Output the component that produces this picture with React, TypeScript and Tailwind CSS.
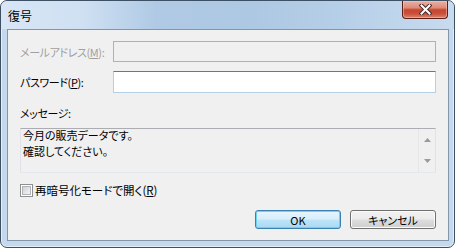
import React from 'react';

const font = "font-['Noto_Sans_CJK_JP','Noto_Sans',sans-serif] [font-feature-settings:'palt']";

const CloseGlyph = () => (
  <svg width="13" height="11" viewBox="0 0 13 11">
    <path d="M2.5 1.5 L10.5 9.5 M10.5 1.5 L2.5 9.5" stroke="#4a2a26" strokeWidth="4" strokeLinecap="square" />
    <path d="M2.5 1.5 L10.5 9.5 M10.5 1.5 L2.5 9.5" stroke="#ffffff" strokeWidth="2" strokeLinecap="square" />
  </svg>
);

const Arrow = ({ up }: { up?: boolean }) => (
  <svg width="7" height="4" viewBox="0 0 7 4">
    <path d={up ? 'M0 4 L3.5 0 L7 4 Z' : 'M0 0 L7 0 L3.5 4 Z'} fill="#9a9a9a" />
  </svg>
);

const Field = ({ label, children, disabled }: { label: React.ReactNode; children: React.ReactNode; disabled?: boolean }) => (
  <div className="flex items-center">
    <div className={`w-[93px] whitespace-nowrap text-[11px] leading-[16px] tracking-[-0.4px] ${disabled ? 'text-[#a0a0a0]' : 'text-black'}`}>{label}</div>
    {children}
  </div>
);

export default function App() {
  return (
    <div className={`w-[455px] h-[248px] bg-white ${font}`}>
      <div className="w-[455px] h-[248px] rounded-[7px] border border-[#3e5064] bg-[#c4d8ee] flex flex-col overflow-hidden shadow-[inset_0_0_0_1px_#e4eef9]">
        {/* Title bar */}
        <div className="h-[28px] flex items-start justify-between rounded-t-[6px] bg-[linear-gradient(to_right,#d8e6f6_0%,#cfe0f2_18%,#b0cae5_34%,#adc8e3_55%,#b6cfe8_75%,#c8dbef_100%)]">
          <div className="pl-[7px] pt-[7px] text-[12px] leading-[16px] text-black">復号</div>
          <div className="mr-[6px] w-[46px] h-[18px] rounded-b-[4px] border border-t-0 border-[#5a2018] flex items-center justify-center bg-[linear-gradient(to_bottom,#e9b1a3_0%,#dc8b78_40%,#c84631_52%,#c9503a_75%,#d98772_100%)] shadow-[inset_0_0_0_1px_rgba(255,200,190,0.5)]">
            <CloseGlyph />
          </div>
        </div>

        <div className="flex flex-1">
          <div className="w-[6px]" />
          {/* Client area */}
          <div className="flex-1 border border-[#8395a9] bg-[#f0f0f0] pl-[12px] pr-[12px] pt-[11px] flex flex-col">
            <Field disabled label={<>メールアドレス(<span className="underline">M</span>):</>}>
              <div className="flex-1 h-[21px] border border-[#aeb2b5] bg-[#f0f0f0]" />
            </Field>
            <div className="mt-[9px]">
              <Field label={<>パスワード(<span className="underline">P</span>):</>}>
                <div className="flex-1 h-[22px] border border-[#b5cfe7] border-t-[#4f7ea9] bg-white" />
              </Field>
            </div>
            <div className="mt-[12px] text-[11px] leading-[16px] tracking-[-0.4px] text-black">メッセージ:</div>
            <div className="mt-[7px] h-[45px] border border-[#e2e3ea] border-t-[#abadb3] border-b-[#e3e9ef] bg-[#f0f0f0] flex">
              <div className="flex-1 pl-[2px] -mt-[2px] text-[11px] leading-[16px] text-black">
                <div>今月の販売データです。</div>
                <div>確認してください。</div>
              </div>
              <div className="w-[17px] border-l border-[#e6e6e6] flex flex-col items-center justify-between pt-[9px] pb-[9px]">
                <Arrow up />
                <Arrow />
              </div>
            </div>
            <div className="mt-[9px] flex items-center h-[16px]">
              <div className="w-[13px] h-[13px] border border-[#8e8f8f] bg-white p-px">
                <div className="w-full h-full border border-[#b0b3b8] bg-[linear-gradient(135deg,#cdd1d6,#f4f5f6)]" />
              </div>
              <div className="ml-[2px] whitespace-nowrap text-[11.5px] leading-[16px] text-black">
                再暗号化モードで開く(<span className="underline">R</span>)
              </div>
            </div>
            <div className="mt-[12px] flex justify-end gap-[9px]">
              <div className="w-[86px] h-[19px] rounded-[3px] border border-[#3c7fb1] flex items-center justify-center text-[11px] leading-[16px] text-black bg-[linear-gradient(to_bottom,#e6f5fd_0%,#d8effc_48%,#bee4f8_52%,#a8d8f3_100%)] shadow-[inset_0_0_0_1px_#6ed2f7]">
                OK
              </div>
              <div className="w-[86px] h-[19px] rounded-[3px] border border-[#707070] flex items-center justify-center text-[11px] leading-[16px] text-black bg-[linear-gradient(to_bottom,#f2f2f2_0%,#ebebeb_48%,#dddddd_52%,#cfcfcf_100%)] shadow-[inset_0_0_0_1px_#fbfbfb]">
                キャンセル
              </div>
            </div>
          </div>
          <div className="w-[5px]" />
        </div>
        <div className="h-[6px]" />
      </div>
    </div>
  );
}
